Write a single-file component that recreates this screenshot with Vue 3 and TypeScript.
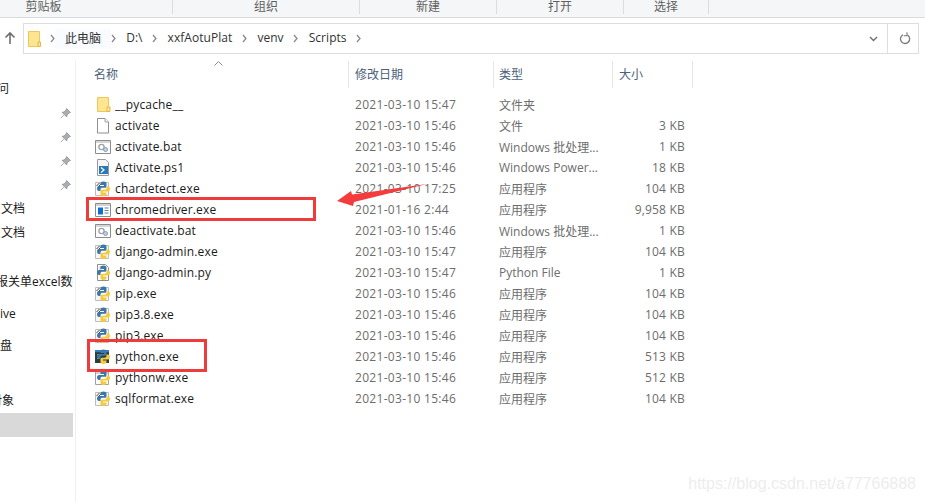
<template>
  <div class="explorer">
    <div class="ribbon">
      <div v-for="g in ribbonGroups" :key="g.label" class="ribbon-group" :style="{ width: g.width + 'px' }">
        {{ g.label }}
      </div>
    </div>

    <div class="address-row">
      <svg class="up-arrow" width="12" height="14" viewBox="0 0 12 14">
        <path d="M6 13V2M1.5 6.5 6 2l4.5 4.5" fill="none" stroke="#6e6e6e" stroke-width="1.6" />
      </svg>
      <div class="address-box">
        <svg class="addr-folder" width="13" height="16" viewBox="0 0 13 16">
          <path d="M.5.5h11v15H.5z" fill="#fde68f" stroke="#eec65c" />
          <path d="M10 11h2.500v4.500H10z" fill="#fde68f" stroke="#e2b84e" />
        </svg>
        <template v-for="(c, i) in crumbs" :key="c">
          <svg class="crumb-sep" width="5" height="9" viewBox="0 0 5 9">
            <path d="M1 1l3 3.5L1 8" fill="none" stroke="#8a8a8a" stroke-width="1.3" />
          </svg>
          <span class="crumb" :class="{ active: i === 0 }">{{ c }}</span>
        </template>
        <svg class="crumb-sep" width="5" height="9" viewBox="0 0 5 9">
          <path d="M1 1l3 3.5L1 8" fill="none" stroke="#8a8a8a" stroke-width="1.3" />
        </svg>
        <svg class="chevron" width="9" height="6" viewBox="0 0 9 6">
          <path d="M1 1l3.5 3.5L8 1" fill="none" stroke="#6e6e6e" stroke-width="1.4" />
        </svg>
        <div class="refresh">
          <svg width="12" height="13" viewBox="0 0 12 13">
            <path d="M4 2.800A4.600 4.600 0 1 0 8.500 3" fill="none" stroke="#7a7a7a" stroke-width="1.3" />
            <path d="M8 .3v3.400H4.800" fill="none" stroke="#7a7a7a" stroke-width="1.1" />
          </svg>
        </div>
      </div>
    </div>

    <div class="body">
      <aside class="nav">
        <div
          v-for="n in navItems"
          :key="n.top"
          class="nav-item"
          :style="{ top: n.top + 'px', textIndent: n.indent + 'px' }"
        >
          {{ n.label }}
        </div>
        <svg v-for="p in pins" :key="p" class="pin" :style="{ top: p + 'px' }" width="11" height="11" viewBox="0 0 11 11">
          <path d="M6.500.5l4 4-1.500.5-2 2-.3 2L2 4.300l2-.3 2-2zM3.800 7.200.8 10.200" fill="#a9adb2" stroke="#8f9399" stroke-width=".8" />
        </svg>
        <div class="nav-selected"></div>
      </aside>

      <main class="list">
        <div class="sort-caret">
          <svg width="9" height="5" viewBox="0 0 9 5"><path d="M.5 4.500l4-4 4 4" fill="none" stroke="#8a8a8a" /></svg>
        </div>
        <div class="header">
          <div class="col name">名称</div>
          <div class="col date">修改日期</div>
          <div class="col type">类型</div>
          <div class="col size">大小</div>
        </div>

        <div v-for="f in files" :key="f.name" class="row">
          <div class="cell name">
            <svg class="file-icon" width="16" height="17" viewBox="0 0 16 17">
              <template v-if="f.icon === 'folder'">
                <path d="M2.500 1.500h11v14h-11z" fill="#fde68f" stroke="#eec65c" />
                <path d="M12 11h3v4.500h-3z" fill="#fde68f" stroke="#e2b84e" />
              </template>
              <template v-else-if="f.icon === 'file'">
                <path d="M2.500 1.500h7.500l3.500 3.500v11h-11z" fill="#fff" stroke="#8f8f8f" />
                <path d="M10 1.500V5h3.500" fill="#f1f1f1" stroke="#a8a8a8" />
              </template>
              <template v-else-if="f.icon === 'bat'">
                <path d="M.5 2.500h15v13H.5z" fill="#fff" stroke="#8c8c8c" />
                <path d="M1 3h14v2H1z" fill="#d6d6d6" />
                <circle cx="6.500" cy="9" r="2.600" fill="none" stroke="#a3a3a3" stroke-width="1.4" />
                <circle cx="10.500" cy="11.500" r="2" fill="#bcd3ea" stroke="#7d9dc0" />
              </template>
              <template v-else-if="f.icon === 'ps1'">
                <path d="M2.500 .5h8l3 3v13h-11z" fill="#f6f6f6" stroke="#9a9a9a" />
                <path d="M4 7h9v8H4z" fill="#2b78b8" />
                <path d="M6 8.500l3 2.500-3 2.500" fill="none" stroke="#fff" stroke-width="1.2" />
              </template>
              <template v-else-if="f.icon === 'app'">
                <path d="M.5 2.500h15v13H.5z" fill="#fff" stroke="#8c8c8c" />
                <path d="M1 3h14v2H1z" fill="#d2d2d2" />
                <path d="M3 6.500h5v7H3z" fill="#0a6fd0" />
                <path d="M9.500 7h4M9.500 9.500h4M9.500 12h4" stroke="#5d7fa5" stroke-width="1.2" />
              </template>
              <template v-else>
                <template v-if="f.icon === 'pyexe'">
                  <path d="M.5 2.500h13v13H.5z" fill="#f7f7f7" stroke="#bdbdbd" />
                  <path d="M1.500 6l3-3M3 7l3-3" stroke="#444" stroke-width="1" />
                </template>
                <template v-else-if="f.icon === 'pyconsole'">
                  <path d="M0 2h14v13H0z" fill="#323a3c" />
                  <path d="M0 2h14v2.200H0z" fill="#2f80c8" />
                  <path d="M2 6.500h4M2 8.500h3M2 10.500h2" stroke="#4fc24a" />
                </template>
                <template v-else-if="f.icon === 'pyfile'">
                  <path d="M2.500.5h8l3 3v13h-11z" fill="#fff" stroke="#8f8f8f" />
                  <path d="M4.500 3h4M4.500 5h2" stroke="#8f8f8f" />
                </template>
                <template v-else>
                  <path d="M.5 2.500h13v13H.5z" fill="#fff" stroke="#a0a0a0" />
                  <path d="M1 3h12v2H1z" fill="#d2d2d2" />
                </template>
                <path class="py-blue" d="M8.500 1.500C6.500 1.500 5.500 2.300 5.500 3.500V5H9v1H4C2.800 6 2 7 2 8.500S2.800 11 4 11h1.500V9.500c0-1.200.8-1.700 2-1.700H10c1 0 1.500-.8 1.500-1.800V3.500c0-1.200-1-2-3-2z" />
                <path class="py-yellow" transform="rotate(180 8.500 8.750)" d="M8.500 1.500C6.500 1.500 5.500 2.300 5.500 3.500V5H9v1H4C2.800 6 2 7 2 8.500S2.800 11 4 11h1.500V9.500c0-1.200.8-1.700 2-1.700H10c1 0 1.500-.8 1.500-1.800V3.500c0-1.200-1-2-3-2z" />
              </template>
            </svg>
            <span class="file-name">{{ f.name }}</span>
          </div>
          <div class="cell date">{{ f.date }}</div>
          <div class="cell type">{{ f.type }}</div>
          <div class="cell size">{{ f.size }}</div>
        </div>
      </main>
    </div>

    <div class="mark mark-driver"></div>
    <div class="mark mark-python"></div>
    <svg class="arrow" width="100" height="30" viewBox="0 0 100 30">
      <path d="M1 21 15 11l1 3.500L91 4 18 22l-1 4z" fill="#f53c3c" />
    </svg>
    <div class="watermark">https://blog.csdn.net/a77766888</div>
  </div>
</template>

<script setup lang="ts">
type IconKind = 'folder' | 'file' | 'bat' | 'ps1' | 'app' | 'pyexe' | 'pyconsole' | 'pywin' | 'pyfile'

interface FileRow {
  name: string
  date: string
  type: string
  size: string
  icon: IconKind
}

const ribbonGroups = [
  { label: '剪贴板', width: 173 },
  { label: '组织', width: 187 },
  { label: '新建', width: 137 },
  { label: '打开', width: 127 },
  { label: '选择', width: 85 },
]

const crumbs = ['此电脑', 'D:\\', 'xxfAotuPlat', 'venv', 'Scripts']

// the pane is scrolled sideways in the screenshot, so labels start off-screen
const navItems = [
  { label: '问', top: 20, indent: -3 },
  { label: '文档', top: 140, indent: 1 },
  { label: '文档', top: 164, indent: 1 },
  { label: '报关单excel数据', top: 213, indent: -4 },
  { label: 'ive', top: 245, indent: 0 },
  { label: '盘', top: 277, indent: 0 },
  { label: '对象', top: 332, indent: -10 },
]

const pins = [48, 72, 96, 120]

const files: FileRow[] = [
  { name: '__pycache__', date: '2021-03-10 15:47', type: '文件夹', size: '', icon: 'folder' },
  { name: 'activate', date: '2021-03-10 15:46', type: '文件', size: '3 KB', icon: 'file' },
  { name: 'activate.bat', date: '2021-03-10 15:46', type: 'Windows 批处理...', size: '1 KB', icon: 'bat' },
  { name: 'Activate.ps1', date: '2021-03-10 15:46', type: 'Windows Power...', size: '18 KB', icon: 'ps1' },
  { name: 'chardetect.exe', date: '2021-03-10 17:25', type: '应用程序', size: '104 KB', icon: 'pyexe' },
  { name: 'chromedriver.exe', date: '2021-01-16 2:44', type: '应用程序', size: '9,958 KB', icon: 'app' },
  { name: 'deactivate.bat', date: '2021-03-10 15:46', type: 'Windows 批处理...', size: '1 KB', icon: 'bat' },
  { name: 'django-admin.exe', date: '2021-03-10 15:47', type: '应用程序', size: '104 KB', icon: 'pyexe' },
  { name: 'django-admin.py', date: '2021-03-10 15:47', type: 'Python File', size: '1 KB', icon: 'pyfile' },
  { name: 'pip.exe', date: '2021-03-10 15:46', type: '应用程序', size: '104 KB', icon: 'pyexe' },
  { name: 'pip3.8.exe', date: '2021-03-10 15:46', type: '应用程序', size: '104 KB', icon: 'pyexe' },
  { name: 'pip3.exe', date: '2021-03-10 15:46', type: '应用程序', size: '104 KB', icon: 'pyexe' },
  { name: 'python.exe', date: '2021-03-10 15:46', type: '应用程序', size: '513 KB', icon: 'pyconsole' },
  { name: 'pythonw.exe', date: '2021-03-10 15:46', type: '应用程序', size: '512 KB', icon: 'pywin' },
  { name: 'sqlformat.exe', date: '2021-03-10 15:46', type: '应用程序', size: '104 KB', icon: 'pyexe' },
]
</script>

<style scoped>
.explorer {
  position: relative;
  width: 925px;
  height: 502px;
  overflow: hidden;
  background: #fff;
  color: #1a1a1a;
  font-family: "Open Sans", "Noto Sans CJK SC", sans-serif;
  font-size: 12px;
}

.ribbon {
  display: flex;
  height: 17px;
  background: #f5f6f7;
  border-bottom: 1px solid #dadbdc;
  color: #5f5f5f;
  line-height: 13px;
}

.ribbon-group {
  box-sizing: border-box;
  height: 14px;
  text-align: center;
  border-right: 1px solid #dcdddf;
}

.ribbon-group:first-child {
  padding-right: 85px;
}

.address-row {
  display: flex;
  align-items: flex-start;
  height: 42px;
  padding: 5px 6px 0 0;
  box-sizing: border-box;
}

.up-arrow {
  margin: 8px 7px 0 4px;
}

.address-box {
  flex: 1;
  display: flex;
  align-items: center;
  height: 31px;
  box-sizing: border-box;
  border: 1px solid #dedede;
  padding-left: 4px;
  color: #333;
}

.addr-folder {
  margin-right: 8.5px;
}

.crumb-sep {
  flex: none;
}

.crumb {
  padding: 0 9.5px 2px 10.5px;
  letter-spacing: 0.05px;
}

.crumb.active {
  background: #f9fbfe;
}

.chevron {
  margin-left: auto;
  margin-right: 9px;
}

.refresh {
  display: flex;
  align-items: center;
  justify-content: center;
  width: 31px;
  height: 100%;
  padding-left: 3px;
  box-sizing: border-box;
  border-left: 1px solid #dedede;
}

.body {
  display: flex;
  height: 442px;
}

.nav {
  position: relative;
  flex: none;
  width: 76px;
  border-right: 1px solid #f0f0f0;
  box-sizing: border-box;
  overflow: hidden;
}

.nav-item {
  position: absolute;
  left: 0;
  width: 73px;
  height: 18px;
  line-height: 18px;
  white-space: nowrap;
  overflow: hidden;
}

.pin {
  position: absolute;
  left: 60px;
}

.nav-selected {
  position: absolute;
  left: 0;
  top: 353px;
  width: 73px;
  height: 24px;
  background: #d9d9d9;
}

.list {
  position: relative;
  flex: 1;
}

.sort-caret {
  position: absolute;
  left: 138px;
  top: 1px;
  line-height: 0;
}

.header {
  display: flex;
  height: 28px;
  margin: 1px 0 5px;
  color: #4c607a;
}

.col {
  box-sizing: border-box;
  height: 27px;
  line-height: 27px;
  padding-left: 6px;
  border-right: 1px solid #e5e5e5;
}

.col.name {
  width: 273px;
  padding-left: 18px;
}

.col.date {
  width: 145px;
}

.col.type {
  width: 119px;
  padding-left: 5px;
}

.col.size {
  width: 80px;
}

.row {
  display: flex;
  align-items: center;
  height: 21px;
}

.cell {
  box-sizing: border-box;
  white-space: nowrap;
  overflow: hidden;
  color: #6d6d6d;
}

.cell.name {
  display: flex;
  align-items: center;
  width: 273px;
  padding-left: 19px;
  color: #1a1a1a;
}

.file-icon {
  flex: none;
  margin-right: 4px;
}

.file-name {
  letter-spacing: 0.15px;
}

.py-blue {
  fill: #3d77a8;
}

.py-yellow {
  fill: #f4cb3e;
}

.cell.date {
  width: 145px;
  padding-left: 6px;
  letter-spacing: 0.3px;
}

.cell.type {
  width: 119px;
  padding-left: 5px;
}

.cell.size {
  width: 72px;
  text-align: right;
  letter-spacing: 0.2px;
}

.mark {
  position: absolute;
  box-sizing: border-box;
  border: 3px solid #f03b3b;
}

.mark-driver {
  left: 86px;
  top: 197px;
  width: 230px;
  height: 24px;
}

.mark-python {
  left: 87px;
  top: 339px;
  width: 120px;
  height: 33px;
}

.arrow {
  position: absolute;
  left: 336px;
  top: 180px;
}

.watermark {
  position: absolute;
  right: 9px;
  top: 475px;
  color: #ededed;
  font-family: "Liberation Sans", sans-serif;
  font-size: 16px;
}
</style>
